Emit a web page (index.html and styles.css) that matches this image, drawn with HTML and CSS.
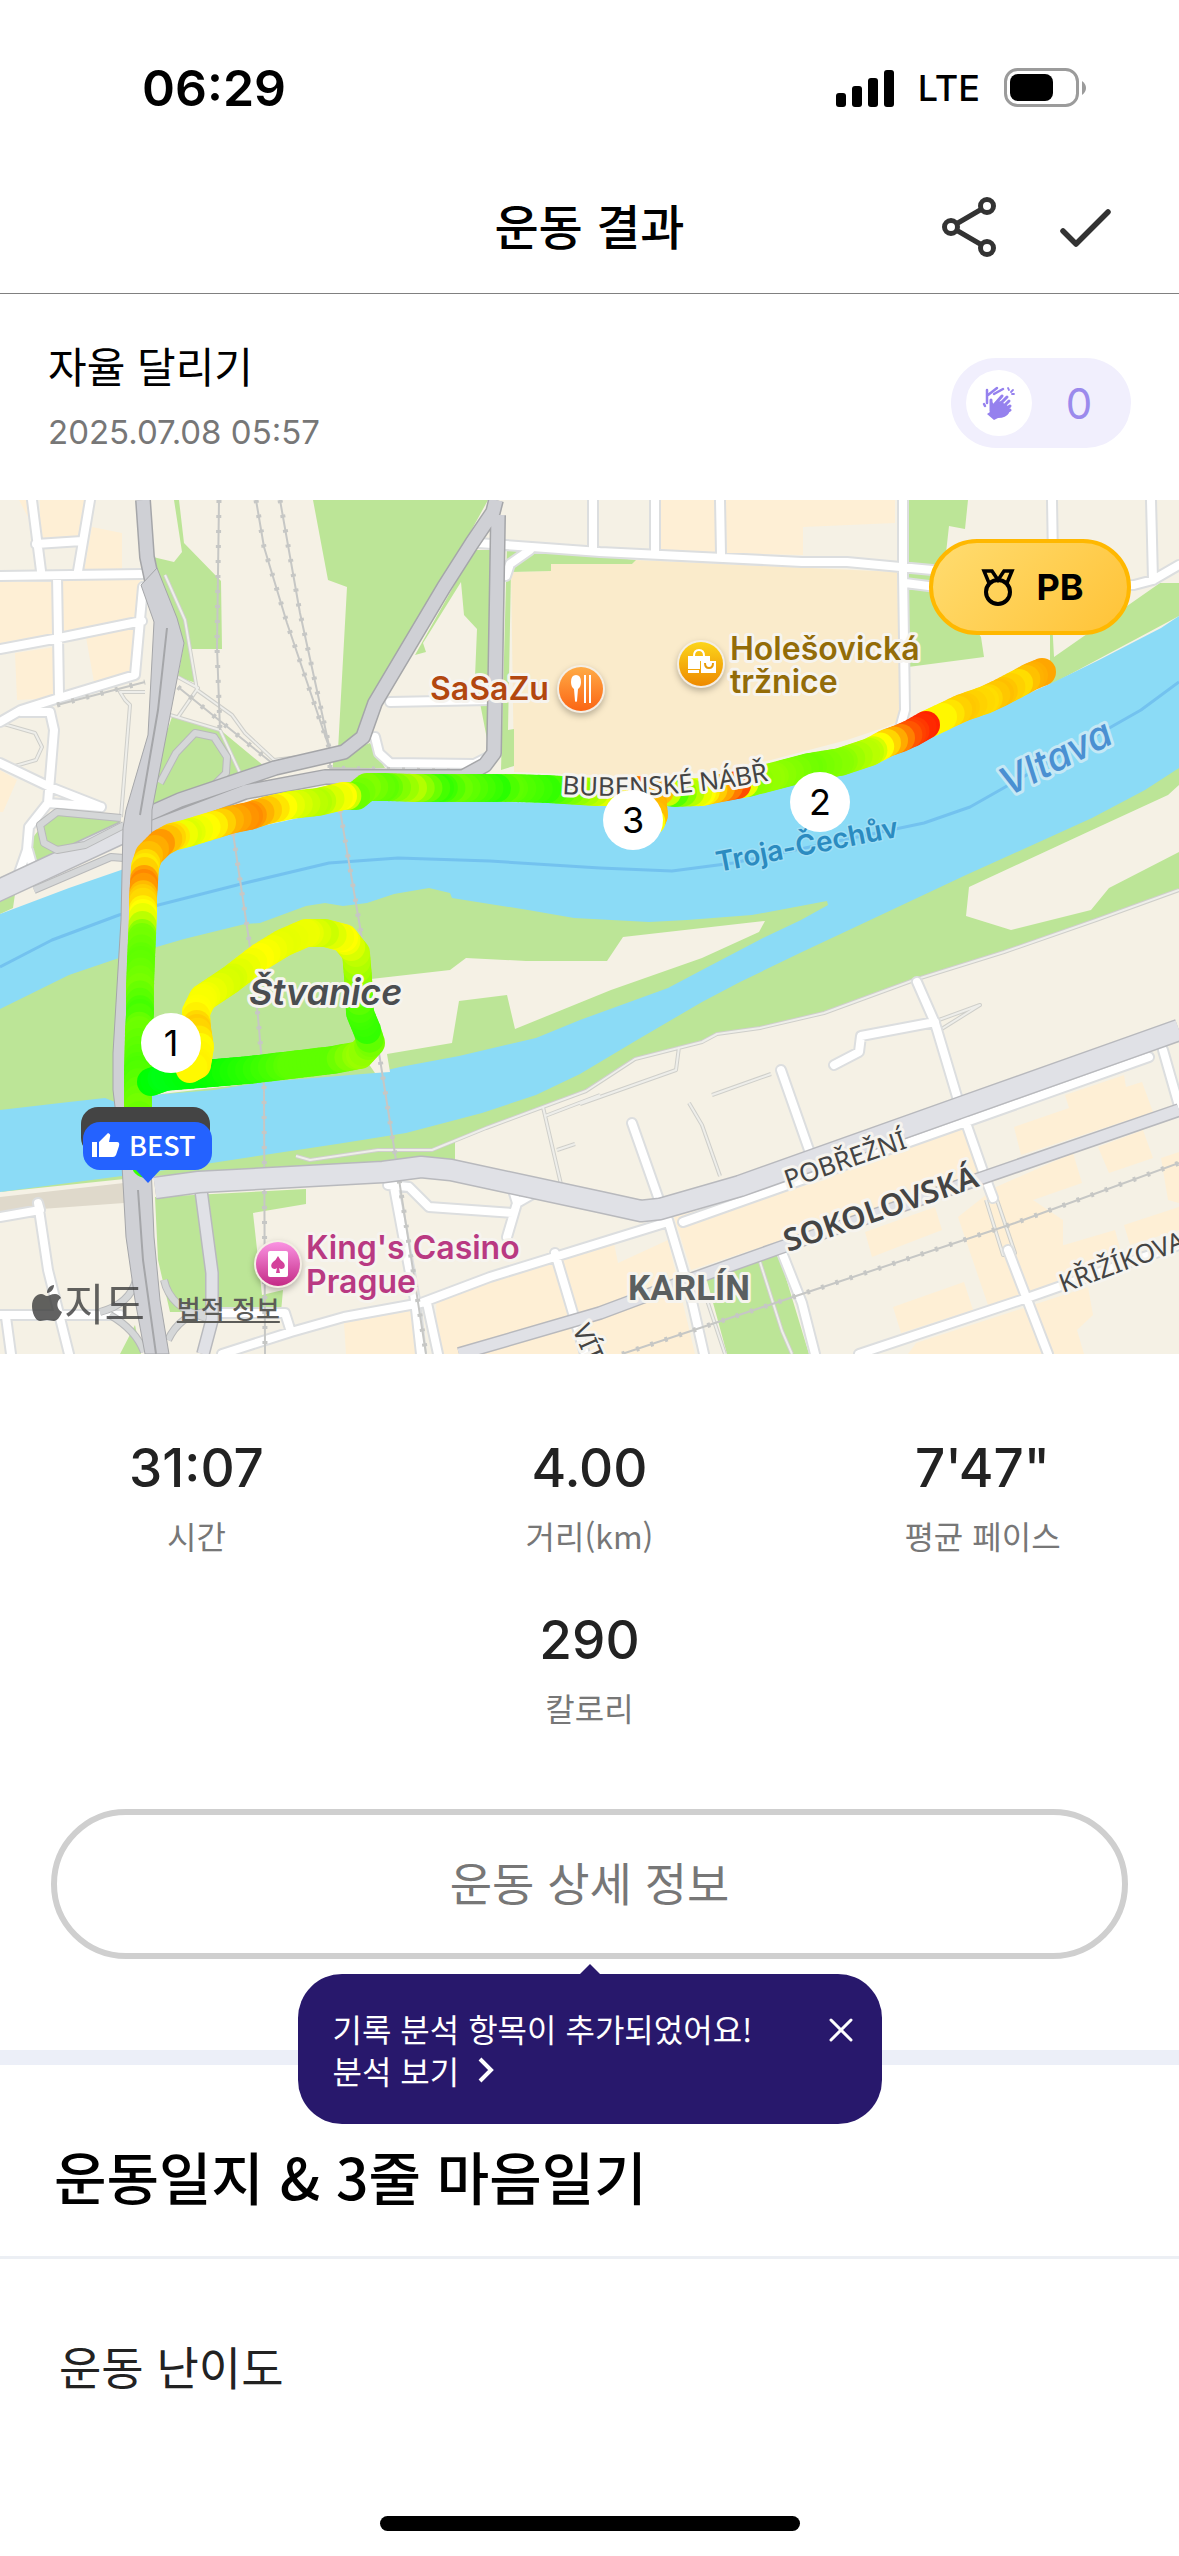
FILE: index.html
```html
<!DOCTYPE html>
<html lang="ko">
  <head>
    <meta charset="UTF-8" />
    <meta name="viewport" content="width=device-width, initial-scale=1" />
    <title>운동 결과</title>
    <link rel="stylesheet" href="styles.css">
  </head>
  <body>
    <div class="status-bar">
      <span class="status-time">06:29</span>
      <div class="status-right">
        <svg width="58" height="38" viewBox="0 0 58 38">
          <rect x="0" y="24" width="10" height="14" rx="3" />
          <rect x="16" y="17" width="10" height="21" rx="3" />
          <rect x="32" y="9" width="10" height="29" rx="3" />
          <rect x="48" y="1" width="10" height="37" rx="3" />
        </svg>
        <span class="status-network">LTE</span>
        <svg width="82" height="40" viewBox="0 0 82 40">
          <rect x="1.5" y="1.5" width="72" height="36" rx="12" fill="none" stroke="#9b9b9b" stroke-width="3" />
          <rect x="6" y="6" width="43" height="27" rx="8" />
          <path d="M78 13q4 3 4 7t-4 7z" fill="#9b9b9b" />
        </svg>
      </div>
    </div>

    <header class="header">
      <h1>운동 결과</h1>
      <div class="header-actions">
        <button type="button" aria-label="공유">
          <svg width="72" height="72" viewBox="0 0 72 72" fill="none" stroke="#333" stroke-width="5">
            <circle cx="54" cy="15" r="6.5" />
            <circle cx="18" cy="36" r="6.5" />
            <circle cx="54" cy="57" r="6.5" />
            <path d="M24 32.500l24-14M24 39.500l24 14" />
          </svg>
        </button>
        <button type="button" aria-label="확인">
          <svg width="72" height="72" viewBox="0 0 72 72" fill="none" stroke="#333" stroke-width="5.500" stroke-linecap="round" stroke-linejoin="round">
            <path d="M14 40l13 13 32-32" />
          </svg>
        </button>
      </div>
    </header>

    <section class="summary">
      <div>
        <h2>자율 달리기</h2>
        <p class="date">2025.07.08 05:57</p>
      </div>
      <button type="button" class="clap" aria-label="박수 0">
        <span class="clap-icon">
          <svg width="34" height="34" viewBox="0 0 34 34" fill="none" stroke="#9581ee" stroke-width="3" stroke-linecap="round">
            <path d="M8 17v9l-3 2 7 6 4-2q8 0 11-5l-1-7-8-5-6 3-2-2z" fill="#9581ee" stroke="none" />
            <path d="M9 14v11M13 18l7-8M16 20l9-9M20 22l7-7M22 25l6-5M22 28l6-4" />
            <path d="M5 4v13M2 18l1 2M6 9l9-7M12 8l9-5" stroke-width="2.500" />
            <path d="M26 2l1 2M31 4l-2 2M32 8h-2" stroke-width="1.800" />
          </svg>
        </span>
        <span class="clap-count">0</span>
      </button>
    </section>

    <section class="map">
      <svg class="map-canvas" viewBox="0 0 1179 854">
        <defs>
          <linearGradient id="gOrange" x2="0" y2="1"><stop stop-color="#ffab46" /><stop offset="1" stop-color="#fb6514" /></linearGradient>
          <linearGradient id="gYellow" x2="0" y2="1"><stop stop-color="#fcd51b" /><stop offset="1" stop-color="#ee8a00" /></linearGradient>
          <linearGradient id="gPink" x2="0" y2="1"><stop stop-color="#fa93e2" /><stop offset="1" stop-color="#c42a86" /></linearGradient>

          <!-- white streets -->
          <path id="streets" d="M32 0L41 71M90 0L78 71M36 44L82 41M0 76L142 74M57 76L59 194M0 149L59 138L142 121M143 87L135 175L59 198L21 210L0 222M21 212H50L54 230L48 303L29 327L27 350L19 373M28 350L33 368M0 263L50 287L101 307M48 303L101 307
            M478 43L600 52L802 62H847L943 71M593 0V50M655 0V53M720 0L721 54M903 0V72L905 210L899 232M905 83L960 90L1134 85L1153 80L1179 65M1052 0L1053 60M1151 0L1153 80M390 202L490 200M375 237L379 253L390 263L474 264L492 255M506 76L510 64L530 50
            M0 717L40 710L38 703L48 770L69 854M6 817L11 854M0 815H120M388 685L409 687L429 707L513 713M394 687L415 800L421 854M513 690L517 703L507 737M517 703L536 692M222 854L291 832L344 817L421 803L490 777L600 743L668 722M214 813H285L291 832M427 803L438 854M555 753L578 830L585 854
            M632 623L658 697L668 720L691 797L704 854M781 570L809 650M917 482L935 523L958 600L985 677L993 698M935 522L861 536L859 552L834 565M683 722L966 622L1149 557M1163 550L1179 606M1008 750L1048 854M859 854L1027 798L1115 767L1179 745M781 750L802 803L815 854" />
          <!-- light gray main roads -->
          <path id="mainRoads" d="M155 688L199 682L383 672L421 667L451 670L600 702L641 711L660 709L740 686L962 607L1134 546L1179 530M-5 392L124 332" />
          <path id="sideRoads" d="M459 854L600 813L675 785L779 748L1179 610M201 690L212 773V820L203 854" />
          <!-- dark gray trunk roads -->
          <path id="trunk" d="M143 0L147 57L155 95L165 120M135 320L180 300L275 268L344 252L363 237L375 203L444 87L472 43L493 12L496 0M140 332L245 292L325 277H463L485 265L494 253L498 15" />
          <path id="ramps" d="M160 283L176 253L195 233L214 237L227 257L226 273L212 287M121 318L57 312L40 325L44 343L57 350L85 345L124 325M34 390L111 357L124 358M100 812Q130 804 136 780M110 815Q136 830 144 852M164 780Q170 808 206 818M205 812Q180 815 168 840" />
          <path id="paths" d="M165 75L185 120L197 190L232 215L245 233L274 260L340 252M170 215L220 230L240 273M178 177L198 188L178 217M145 192H120L125 200L130 205L121 317M0 223L35 233L42 247L36 260L15 266M296 656L310 660L378 650L432 650L486 628L586 591L635 559L702 542L717 534L760 528L824 513L914 480L1004 452L1096 420L1179 390M580 604L676 570L679 547M543 607L563 693M689 603L702 625L720 676M712 595L771 574M936 521L980 505L940 530M996 697L1015 753L1003 755L986 700M707 800L725 854M760 762L782 831L792 854M545 616L600 595M557 650L575 644" />
          <path id="rails" d="M219 0L217 147L220 230M256 0L264 47L287 123L330 250M280 0L300 113L330 250V268L480 272M178 187L272 263M57 205L145 182M233 333L249 440L258 517L264 587L265 854M340 310L360 427L379 553L396 660L426 854M622 854L805 793L1015 723L1179 663" />
          <path id="bubenske" d="M562 294Q670 302 782 278" />
        </defs>

        <rect class="land" width="1179" height="854" />

        <!-- housing blocks -->
        <path class="block" d="M19 0L28 17V0ZM40 0H84L80 38L40 40ZM92 27L122 33V70H84ZM0 82H54L55 133L0 143ZM63 80H140L136 118L63 132ZM86 137L136 128L130 172L94 182ZM15 153L55 147V198L17 200ZM0 270L17 280L3 312H0Z
          M660 0H716V53L660 51ZM725 0H895V23L803 27V55L727 53Z
          M674 717L700 710L735 708L755 697L790 690L825 680L862 660L940 635L966 623L985 673L691 770ZM865 732L935 707L942 730L872 757ZM1014 627L1069 608L1065 595L1124 575L1126 587L1142 582L1153 612L1021 655ZM1098 647L1143 630L1153 658L1109 673ZM1161 658L1179 652V703L1168 700Z
          M996 687L1073 653L1082 683L1033 700L1063 720V747L1054 748L1115 730L1123 760L1027 800L988 805L958 717ZM893 807L964 782L973 810L901 833ZM916 843L1088 787L1093 815L1077 830L1084 854H908ZM1124 725L1179 707V730L1130 745Z
          M436 793L590 742L614 743L618 763L668 740L695 854H437ZM344 823L415 810L421 854H346Z" />
        <path class="market" d="M511 72L551 71V64H632L635 60L897 72L901 220L886 227L847 240L771 260L717 272L641 277L514 272Z" />
        <path class="quay" d="M0 697L124 683V703L0 712Z" />

        <!-- parks -->
        <path class="park" d="M153 57L174 62L182 52L174 0H179L184 43L221 81L222 149H191L196 183L178 177L184 143L157 73Z
          M313 0L328 80L347 87L338 250L356 240L488 0ZM474 50H492V265L475 177L477 129L464 115L461 82L423 143L426 152L415 155ZM333 257L370 243L385 268H333Z
          M172 217L218 228L264 266L153 307L150 280ZM54 310L115 317L124 327L34 367L31 340ZM0 399L15 394L13 408L0 414Z
          M507 45L600 56L636 60L632 64H551V71L511 72L508 230L514 229V266L501 270Z
          M908 0H968L965 29L949 26L943 80L981 137L984 157L908 167ZM1179 83L1160 83L1054 157L1052 120H1050V185L1179 116Z
          M155 697L306 689V704L253 713L262 795L283 790L281 812H170L158 760ZM706 777L779 755L809 854H727ZM135 825L141 854H120Z" />
        <path class="park" d="M0 692L153 676L455 667V640L486 628L586 591L635 559L702 542L717 534L760 528L824 513L914 480L1004 452L1096 420L1179 390V230L600 480Z" />
        <path class="land" d="M969 387L1092 330L1168 295L1179 285V352L1109 388L1091 410L1011 430L966 416Z" />

        <!-- river with the island on top -->
        <path class="water" d="M0 414L69 388L124 369L176 348L230 333L321 313L367 300L580 303L675 305L744 292L828 273L905 250L962 223L1054 182L1099 160L1161 128L1179 116V268L1145 290L1092 318L966 375L866 422L802 452L740 482L702 502L637 540L580 574L536 595L482 613L406 633L337 644L264 655L153 672L122 676L0 692Z" />
        <path class="park" d="M0 509L69 475L119 458L184 439L245 424L260 423L306 406L325 403L343 406L367 403L394 394L429 388L450 393L452 398L528 410L574 418L649 422L687 420L752 415L827 401L828 405L801 420L763 438L702 470L668 488L580 520L536 538L459 556L400 567L375 573L264 582L214 590L153 595L115 602L105 598L69 602L0 610Z" />
        <path class="land" d="M371 479L450 470L466 458L526 461H607L623 437L765 421L759 432L702 458L611 490L515 529L507 495L459 501L452 543L387 554L390 572L375 573L366 560ZM153 595L150 592L264 578V582Z" />
        <path class="river-line" d="M0 467L52 440L119 415L245 383L329 363L398 358L490 361L600 368L672 371L733 363L924 323L970 307L1000 290L1141 210L1179 182" />

        <!-- roads: casing first, then the fill -->
        <use href="#paths" class="path-edge" /><use href="#paths" class="path-fill" />
        <use href="#streets" class="street-edge" /><use href="#streets" class="street-fill" />
        <use href="#rails" class="rail" /><use href="#rails" class="rail-ties" />
        <use href="#sideRoads" class="side-edge" /><use href="#sideRoads" class="side-fill" />
        <use href="#mainRoads" class="main-edge" /><use href="#mainRoads" class="main-fill" />
        <use href="#ramps" class="ramp-edge" /><use href="#ramps" class="ramp-fill" />
        <use href="#trunk" class="trunk-edge" /><use href="#trunk" class="trunk-fill" />
        <path class="highway" d="M141 85L154 122L148 235L126 310L123 328L121 420L113 553V590L122 665L126 737L135 800L145 854H169L160 800L154 737L151 665L148 590L150 420L152 310L184 143L177 118L157 68Z" />
        <path class="highway-line" d="M167 128L158 210L140 315M138 690L143 760L156 854" />

        <g id="route"></g>

        <!-- place labels -->
        <text class="street-name"><textPath href="#bubenske">BUBENSKÉ NÁBŘ</textPath></text>
        <text class="street-name" transform="translate(788 689) rotate(-19)">POBŘEŽNÍ</text>
        <text class="street-name bold" transform="translate(788 752) rotate(-19)">SOKOLOVSKÁ</text>
        <text class="street-name" transform="translate(1063 793) rotate(-20)">KŘIŽÍKOVA</text>
        <text class="street-name" transform="translate(572 829) rotate(66)">VÍTKOVA</text>
        <text class="district" x="628" y="800">KARLÍN</text>
        <text class="island" x="249" y="505">Štvanice</text>
        <text class="river" transform="translate(1008 297) rotate(-27)">Vltava</text>
        <text class="bridge" transform="translate(718 372) rotate(-11)">Troja-Čechův</text>

        <g class="poi food">
          <circle cx="581" cy="189" r="24" class="poi-ring" />
          <circle cx="581" cy="189" r="22" fill="url(#gOrange)" />
          <path d="M576 175q-5 0-5 7 0 5 3 7l1 12q1 2 2 0l1-12q3-2 3-7 0-7-5-7z" fill="#fff" />
          <path d="M585 175v28M590 175v28" stroke="#fff" stroke-width="2" />
          <text x="430" y="200">SaSaZu</text>
        </g>
        <g class="poi shop">
          <circle cx="701" cy="164" r="24" class="poi-ring" />
          <circle cx="701" cy="164" r="22" fill="url(#gYellow)" />
          <path d="M688 156h22v5h-10v8h-12zM688 170h11v3h-11zM701 161h15v12h-15z" fill="#fff" />
          <path d="M694 156q0-6 5-6t5 6" fill="none" stroke="#fff" stroke-width="2" />
          <path d="M705 163q0 5 4 5t4-5" fill="none" stroke="#e79a08" stroke-width="2" />
          <text x="730" y="160">Holešovická<tspan x="730" y="193">tržnice</tspan></text>
        </g>
        <g class="poi casino">
          <circle cx="278" cy="764" r="24" class="poi-ring" />
          <circle cx="278" cy="764" r="22" fill="url(#gPink)" />
          <rect x="268" y="751" width="20" height="26" rx="2" fill="#fff" />
          <path d="M278 756q2 4 5 6 3 3 1 6-3 2-5 0l1 5h-4l1-5q-2 2-5 0-2-3 1-6 3-2 5-6z" fill="#d4419b" />
          <text x="306" y="759">King's Casino<tspan x="306" y="793">Prague</tspan></text>
        </g>

        <!-- kilometre pins -->
        <g class="pin">
          <circle cx="171" cy="543" r="30" /><text x="171" y="556">1</text>
          <circle cx="820" cy="302" r="30" /><text x="820" y="315">2</text>
          <circle cx="633" cy="320" r="30" /><text x="633" y="333">3</text>
        </g>

        <g class="best">
          <rect x="81" y="607" width="129" height="48" rx="17" fill="#444" />
          <path d="M134 668h28l-14 15z" fill="#2462ff" />
          <rect x="83" y="622" width="129" height="48" rx="17" fill="#2462ff" />
          <path d="M92 642h5v15h-5zM99 657V642l9-9q3 1 2 4l-1 5h8q3 0 2 4l-3 9q-1 2-3 2z" fill="#fff" />
          <text x="129" y="656">BEST</text>
        </g>

        <g class="maps-mark">
          <path transform="translate(32 785)" d="M15 11c2 0 4-2 8-2 3 0 5 2 6 4-5 3-5 11 1 14-2 5-5 9-8 9-3 0-4-1-7-1s-4 1-7 1C3 36 0 27 0 21 0 13 5 9 9 9c3 0 4 2 6 2zM15 8c0-4 3-8 7-8 0 4-3 8-7 8z" />
          <text x="64" y="821">지도</text>
        </g>
      </svg>
      <a class="legal" href="#legal">법적 정보</a>
      <button type="button" class="pb">
        <svg width="36" height="40" viewBox="0 0 36 40" fill="none" stroke="#000" stroke-width="4">
          <circle cx="18" cy="25" r="12" />
          <path d="M9 16L4 4h8l6 9 6-9h8l-5 12" stroke-width="3.500" />
        </svg>
        PB
      </button>
    </section>

    <dl class="stats">
      <div><dd>31:07</dd><dt>시간</dt></div>
      <div><dd>4.00</dd><dt>거리(km)</dt></div>
      <div><dd>7'47"</dd><dt>평균 페이스</dt></div>
      <div class="stat-center"><dd>290</dd><dt>칼로리</dt></div>
    </dl>

    <div class="detail">
      <button type="button" class="detail-button">운동 상세 정보</button>
      <div class="tooltip">
        <div>
          <p>기록 분석 항목이 추가되었어요!</p>
          <a href="#analysis">분석 보기
            <svg width="18" height="26" viewBox="0 0 18 26" fill="none" stroke="#fff" stroke-width="4"><path d="M3 2l11 11L3 24" /></svg>
          </a>
        </div>
        <button type="button" aria-label="닫기">
          <svg width="26" height="26" viewBox="0 0 26 26" stroke="#fff" stroke-width="3" stroke-linecap="round"><path d="M3 3l20 20M23 3L3 23" /></svg>
        </button>
      </div>
    </div>

    <section class="diary">
      <h2>운동일지 &amp; 3줄 마음일기</h2>
      <h3>운동 난이도</h3>
    </section>

    <div class="home-indicator"></div>

    <script src="route.js"></script>
  </body>
</html>
```

FILE: styles.css
```css
* {
  box-sizing: border-box;
}
body {
  margin: 0;
  min-height: 100vh;
  display: flex;
  flex-direction: column;
  font-family: "Noto Sans CJK KR", sans-serif;
  background-color: #fff;
  color: #000;
}
h1,
h2,
h3,
p,
dl,
dd {
  margin: 0;
  font-weight: 400;
}
button {
  font-family: inherit;
  padding: 0;
  border: none;
  background: none;
  cursor: pointer;
}
svg {
  display: block;
}

/* status bar */
.status-bar {
  display: flex;
  justify-content: space-between;
  align-items: center;
  height: 160px;
  padding: 16px 93px 0 142px;
  font-family: Inter, sans-serif;
}
.status-time {
  font-size: 50px;
  font-weight: 600;
}
.status-right {
  display: flex;
  align-items: center;
  gap: 24px;
}
.status-network {
  font-size: 36px;
  font-weight: 500;
}

/* header */
.header {
  display: grid;
  grid-template-columns: 1fr auto 1fr;
  align-items: center;
  height: 134px;
  padding: 0 58px;
  border-bottom: 1px solid #808080;
}
.header h1 {
  grid-column: 2;
  padding-bottom: 6px;
  font-size: 48px;
  font-weight: 500;
}
.header-actions {
  display: flex;
  justify-content: flex-end;
  gap: 44px;
}

/* title and claps */
.summary {
  display: flex;
  justify-content: space-between;
  align-items: flex-end;
  padding: 41px 48px 52px;
}
.summary h2 {
  font-size: 42px;
  line-height: 60px;
}
.date {
  margin-top: 21px;
  font-family: Inter, sans-serif;
  font-size: 33px;
  line-height: 32px;
  color: #777;
}
.clap {
  display: flex;
  align-items: center;
  width: 180px;
  height: 90px;
  padding: 0 5px 0 15px;
  border-radius: 45px;
  background-color: #f1effd;
}
.clap-icon {
  display: flex;
  align-items: center;
  justify-content: center;
  width: 66px;
  height: 66px;
  border-radius: 50%;
  background-color: #fff;
}
.clap-count {
  flex: 1;
  font-family: Inter, sans-serif;
  font-size: 42px;
  color: #9b8aec;
}

/* map */
.map {
  position: relative;
  font-family: Inter, "Noto Sans CJK KR", sans-serif;
}
.map-canvas {
  width: 100%;
  height: auto;
}
.map-canvas use,
.river-line {
  fill: none;
  stroke-linejoin: round;
}
.land {
  fill: #f5f1e5;
}
.block {
  fill: #feefd5;
}
.market {
  fill: #faebcb;
}
.quay {
  fill: #dfd9cb;
}
.park {
  fill: #bce597;
}
.water {
  fill: #8bdbf6;
}
.river-line {
  stroke: #73c2ef;
  stroke-width: 3;
}
.path-edge {
  stroke: #cfcfca;
  stroke-width: 4;
}
.path-fill {
  stroke: #eeeeea;
  stroke-width: 2;
}
.street-edge {
  stroke: #dcdedf;
  stroke-width: 12;
  stroke-linecap: round;
}
.street-fill {
  stroke: #fff;
  stroke-width: 8;
  stroke-linecap: round;
}
.rail {
  stroke: #c6c7c5;
  stroke-width: 2;
}
.rail-ties {
  stroke: #c6c7c5;
  stroke-width: 5;
  stroke-dasharray: 3 12;
}
.side-edge {
  stroke: #b8b9bd;
  stroke-width: 14;
}
.side-fill {
  stroke: #e0e1e6;
  stroke-width: 11;
}
.main-edge {
  stroke: #b8b9bd;
  stroke-width: 23;
}
.main-fill {
  stroke: #e0e1e6;
  stroke-width: 20;
}
.ramp-edge {
  stroke: #b8b9ba;
  stroke-width: 8;
}
.ramp-fill {
  stroke: #d5d7d8;
  stroke-width: 6;
}
.trunk-edge {
  stroke: #a5a6a9;
  stroke-width: 16;
}
.trunk-fill {
  stroke: #cfd0d5;
  stroke-width: 13;
}
.highway {
  fill: #cfd0d5;
  stroke: #a5a6a9;
  stroke-width: 1;
}
.highway-line {
  fill: none;
  stroke: #a5a6a9;
  stroke-width: 2;
}
.map-canvas text {
  font-weight: 600;
  font-size: 32px;
  stroke: #f6f4ef;
  stroke-width: 6px;
  stroke-linejoin: round;
  paint-order: stroke;
}
.map-canvas .street-name {
  font-family: "Noto Sans", sans-serif;
  font-size: 26px;
  font-weight: 400;
  fill: #444;
}
.map-canvas .street-name.bold {
  font-size: 31px;
  font-weight: 600;
}
.map-canvas .district {
  font-family: Roboto, sans-serif;
  font-size: 35px;
  font-weight: 700;
  fill: #5b5f60;
}
.map-canvas .island {
  font-size: 36px;
  font-style: italic;
  fill: #4a4d50;
}
.map-canvas .river {
  font-size: 39px;
  font-weight: 500;
  font-style: italic;
  fill: #4a90d2;
  stroke: #c5e8f5;
}
.map-canvas .bridge {
  fill: #2b8bc0;
  font-size: 28px;
  stroke: #a0dff5;
  stroke-width: 3px;
}
.poi-ring {
  fill: #f4eee4;
  filter: drop-shadow(0 3px 3px rgba(0, 0, 0, 0.25));
}
.food text {
  fill: #b2470f;
}
.shop text {
  fill: #936c08;
}
.casino text {
  fill: #b93982;
}
.pin circle {
  fill: #fff;
}
.map-canvas .pin text {
  font-size: 36px;
  font-weight: 400;
  text-anchor: middle;
  stroke: none;
}
.map-canvas .best text {
  font-family: "Noto Sans CJK KR", sans-serif;
  font-size: 27px;
  font-weight: 500;
  fill: #fff;
  stroke: none;
}
.maps-mark {
  fill: #3c3c3c;
  opacity: 0.8;
}
.map-canvas .maps-mark text {
  font-size: 44px;
  font-weight: 400;
  stroke: none;
}
.legal {
  position: absolute;
  left: 15%;
  bottom: 28px;
  font-family: "Noto Sans CJK KR", sans-serif;
  font-size: 26px;
  font-weight: 500;
  color: #5c5c58;
}
.pb {
  position: absolute;
  top: 39px;
  right: 48px;
  display: flex;
  align-items: center;
  justify-content: center;
  gap: 20px;
  width: 202px;
  height: 96px;
  padding-left: 4px;
  border: 4px solid #ffb800;
  border-radius: 48px;
  background: linear-gradient(135deg, #ffdc70, #ffc337);
  font-size: 36px;
  font-weight: 700;
  color: #000;
}

/* numbers */
.stats {
  display: grid;
  grid-template-columns: repeat(3, 1fr);
  row-gap: 51px;
  padding: 82px 0 80px;
  text-align: center;
}
.stats dd {
  font-family: Inter, sans-serif;
  font-size: 53px;
  font-weight: 500;
  line-height: 64px;
  color: #222;
}
.stats dt {
  margin-top: 13px;
  font-size: 32px;
  line-height: 44px;
  color: #777;
}
.stat-center {
  grid-column: 2;
}

/* detail button with the tooltip under it */
.detail {
  position: relative;
  margin: 0 51px 91px;
}
.detail-button {
  width: 100%;
  height: 150px;
  padding-bottom: 6px;
  border: 6px solid #cfcfcf;
  border-radius: 75px;
  font-size: 46px;
  color: #777;
}
.tooltip {
  position: absolute;
  top: calc(100% + 15px);
  left: 50%;
  transform: translateX(-50%);
  display: flex;
  justify-content: space-between;
  align-items: flex-start;
  width: 584px;
  height: 150px;
  padding: 33px 28px 0 35px;
  border-radius: 44px;
  background-color: #28186c;
  color: #fff;
  font-size: 32px;
  line-height: 42px;
}
.tooltip::before {
  content: "";
  position: absolute;
  bottom: 100%;
  left: 50%;
  transform: translateX(-50%);
  border: 10px solid transparent;
  border-top: none;
  border-bottom-color: #28186c;
}
.tooltip a {
  display: flex;
  align-items: center;
  gap: 18px;
  color: #fff;
  text-decoration: none;
}
.tooltip button {
  margin-top: 10px;
}

/* diary */
.diary {
  border-top: 15px solid #eceff8;
}
.diary h2 {
  padding: 70px 54px 41px;
  border-bottom: 3px solid #eceff4;
  font-size: 57px;
  font-weight: 500;
  line-height: 80px;
}
.diary h3 {
  padding: 74px 59px 0;
  font-size: 46px;
  line-height: 64px;
  color: #222;
}

.home-indicator {
  width: 420px;
  height: 15px;
  margin: auto auto 25px;
  border-radius: 8px;
  background-color: #000;
}
```

FILE: route.js
```js
// x, y, hue (0 = slow, 120 = fast)
const tracks = [
  [
    [1042, 172, 39], [1030, 177, 42], [1019, 183, 52], [1000, 193, 45], [985, 200, 52], [962, 208, 47],
    [943, 217, 58], [928, 224, 58], [926, 225, 8], [912, 233, 15], [901, 238, 30], [887, 243, 50],
    [870, 252, 75], [840, 262, 88], [809, 267, 94], [771, 277, 85], [748, 283, 88], [737, 285, 18],
    [721, 288, 40], [702, 292, 60], [675, 293, 100], [660, 291, 45], [635, 290, 25], [615, 292, 55],
    [595, 292, 75], [547, 289, 108], [510, 288, 98], [497, 288, 110], [459, 288, 95], [440, 288, 108],
    [413, 288, 78], [385, 287, 98], [367, 287, 90], [356, 296, 95], [343, 296, 60], [318, 302, 78],
    [291, 305, 66], [268, 310, 48], [249, 316, 33], [230, 320, 42], [214, 325, 56], [188, 333, 68],
    [172, 337, 50], [161, 343, 36], [149, 355, 45], [145, 367, 55], [144, 383, 32], [143, 398, 48],
    [143, 413, 60], [142, 437, 92], [141, 460, 98], [140, 487, 92], [140, 513, 104], [139, 530, 94],
    [138, 570, 102], [138, 607, 93], [146, 668, 108]
  ],
  [[652, 295, 40], [654, 315, 45], [650, 325, 68]],
  [
    [151, 582, 120], [165, 577, 125], [214, 573, 118], [249, 570, 110], [291, 565, 98], [333, 560, 98],
    [360, 555, 84], [371, 543, 92], [367, 530, 108], [360, 513, 105], [358, 477, 86], [356, 453, 75],
    [344, 438, 60], [325, 433, 72], [306, 433, 64], [283, 443, 66], [260, 457, 60], [230, 480, 70],
    [203, 498, 62], [196, 512, 60], [197, 528, 48], [200, 547, 59], [197, 565, 57], [186, 571, 62]
  ]
];

const route = document.getElementById("route");
let dots = 0;
let hue = 0;

tracks.forEach((points) => {
  for (let i = 1; i < points.length; i++) {
    const [x1, y1, h1] = points[i - 1];
    const [x2, y2, h2] = points[i];
    const steps = Math.max(1, Math.round(Math.hypot(x2 - x1, y2 - y1) / 4));
    for (let s = 0; s < steps; s++) {
      const t = s / steps;
      if (s === 0 || dots % 2 === 0) {
        hue = h1 + (h2 - h1) * t;
      }
      const dot = document.createElementNS("http://www.w3.org/2000/svg", "circle");
      dot.setAttribute("cx", x1 + (x2 - x1) * t);
      dot.setAttribute("cy", y1 + (y2 - y1) * t);
      dot.setAttribute("r", 14);
      dot.setAttribute("fill", `hsl(${hue}, 100%, 50%)`);
      route.appendChild(dot);
      dots++;
    }
  }
});
```
